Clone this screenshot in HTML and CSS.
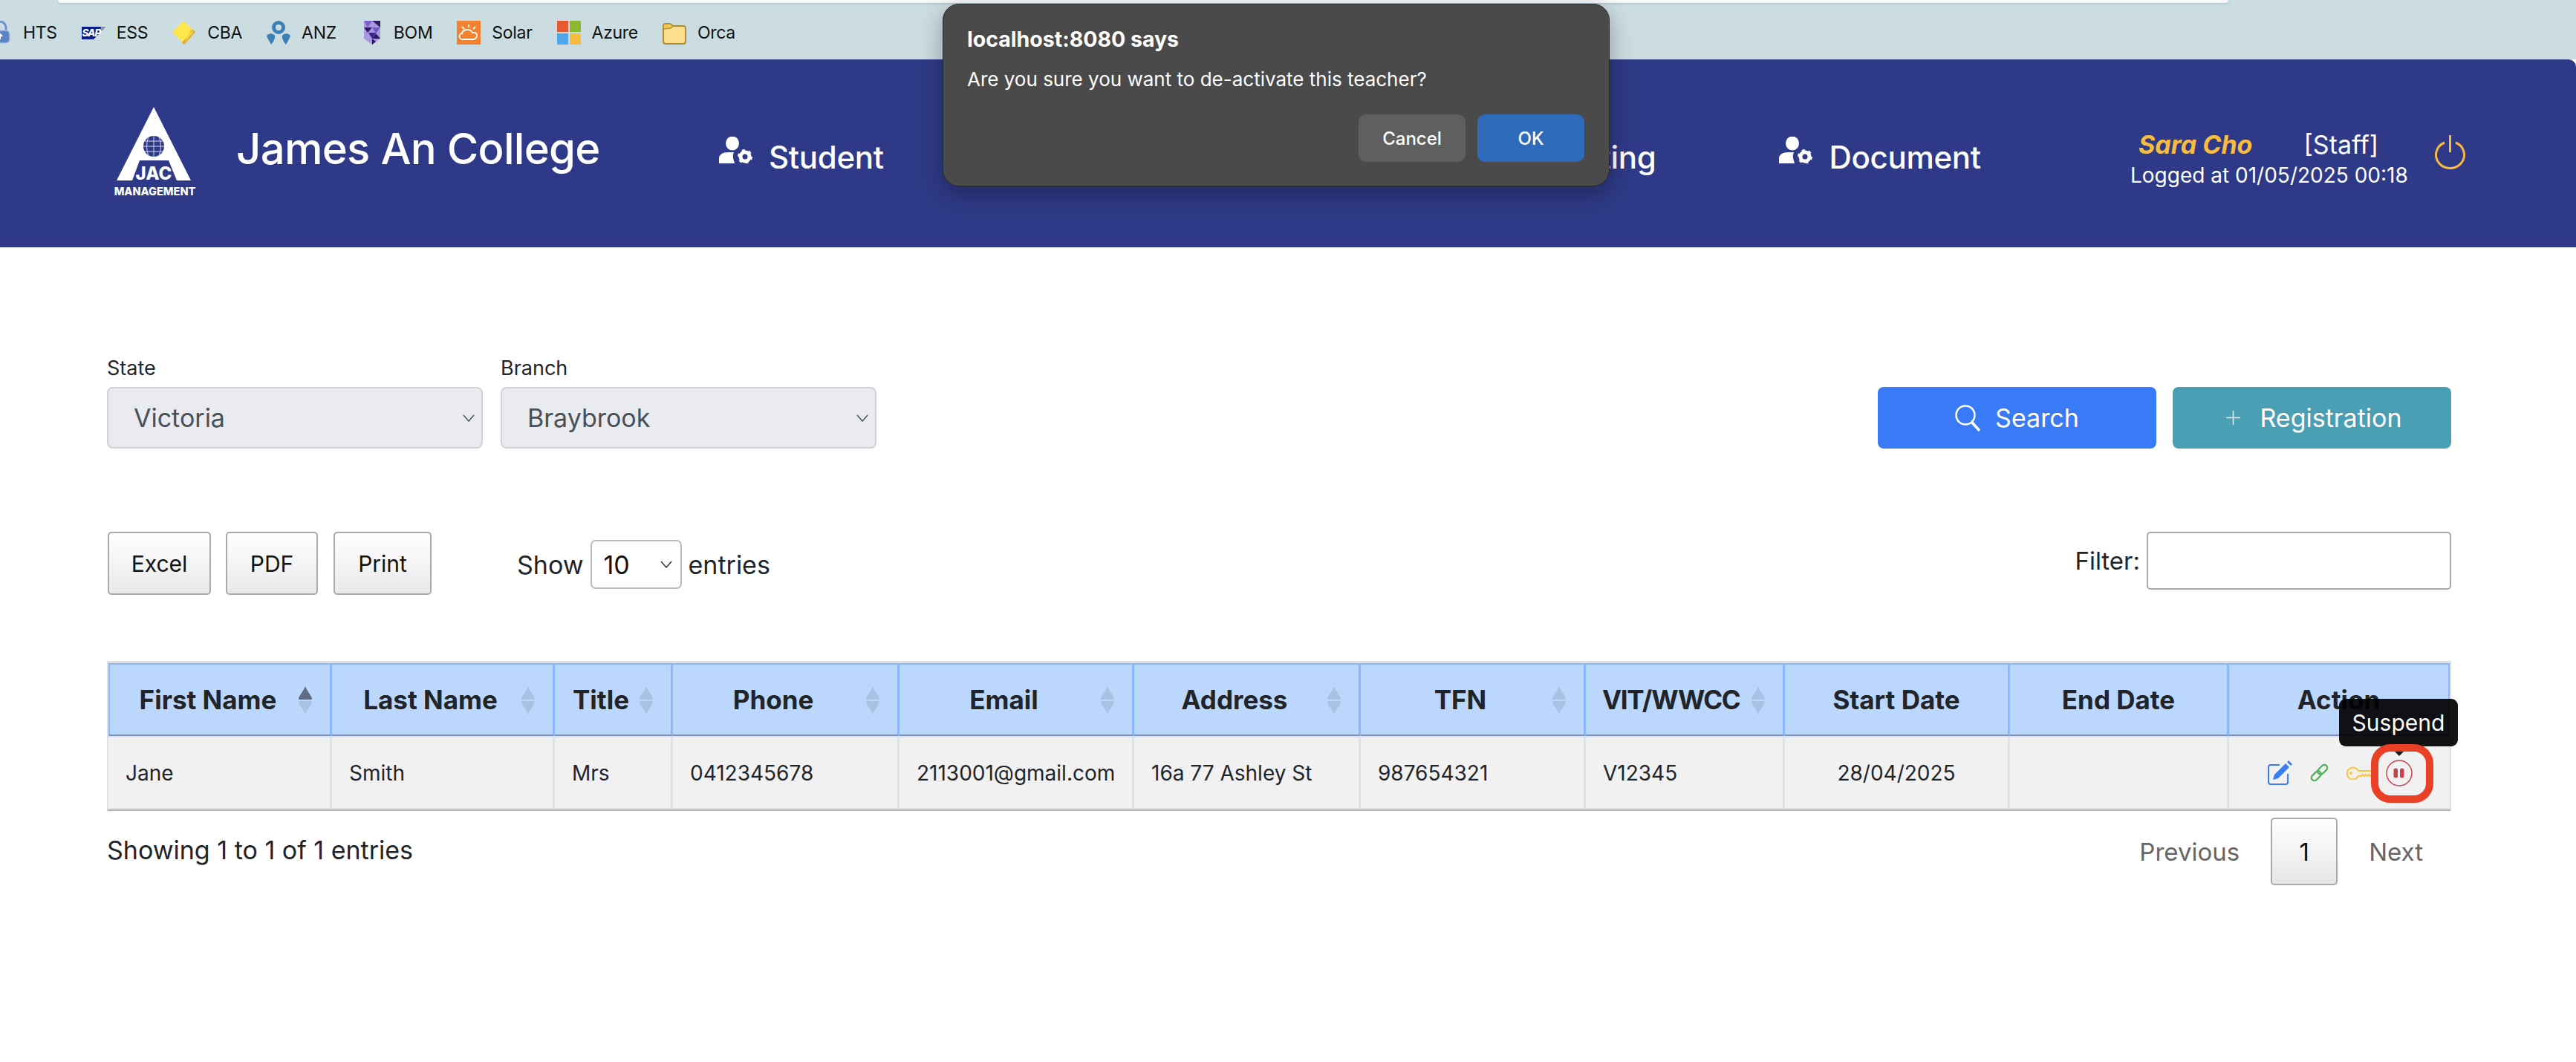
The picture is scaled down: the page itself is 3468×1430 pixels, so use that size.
FILE: index.html
```html
<!DOCTYPE html>
<html lang="en">

<head>
    <meta charset="UTF-8">
    <meta name="viewport" content="width=device-width, initial-scale=1.0">
    <title>James An College</title>
    <link rel="stylesheet" href="styles.css">
</head>

<body>
    <!-- Browser bookmarks -->
    <div class="browser-bar">
        <div class="url-edge"></div>
        <div class="bookmarks">
            <div class="bookmark">
                <svg class="bm-icon" viewBox="0 0 32 32"><path d="M8 13V9a8 8 0 0 1 16 0v4" fill="none" stroke="#6f8fc9" stroke-width="3"/><rect x="3" y="13" width="26" height="17" rx="5" fill="#5d83c6" stroke="#a9bfe4" stroke-width="1.5"/><path d="M16 18v7M13 21l3-3 3 3" fill="none" stroke="#fff" stroke-width="2"/></svg>
                <span>HTS</span>
            </div>
            <div class="bookmark">
                <svg class="bm-icon" viewBox="0 0 32 32"><polygon points="0,8 32,8 16,25 0,25" fill="#0a1f8f"/><polygon points="26,8 32,8 25,15" fill="#8a94a8"/><text class="sap-text" x="0.500" y="21">SAP</text></svg>
                <span>ESS</span>
            </div>
            <div class="bookmark">
                <svg class="bm-icon" viewBox="0 0 32 32"><polygon points="15,0 31,15 16,32 0,15" fill="#fde74c"/><polygon points="26,11 31,15 16,32 13,29 21,21" fill="#d9a63c"/><polygon points="29,15 16,30 20,21 26,13" fill="#f8cf3f"/></svg>
                <span>CBA</span>
            </div>
            <div class="bookmark">
                <svg class="bm-icon" viewBox="0 0 32 32"><circle cx="16" cy="9" r="6.5" fill="none" stroke="#3f7fb9" stroke-width="5"/><path d="M0 20c4-4 9-3 11 0 1 4-3 10-5 12-2-4-5-8-6-12zM32 20c-4-4-9-3-11 0-1 4 3 10 5 12 2-4 5-8 6-12z" fill="#3f7fb9"/></svg>
                <span>ANZ</span>
            </div>
            <div class="bookmark bookmark-narrow">
                <svg class="bm-icon" viewBox="0 0 22 32"><polygon points="0,0 22,0 22,24 11,32 0,24" fill="#a898e0"/><polygon points="0,0 11,0 5,9" fill="#7a63c9"/><polygon points="11,0 22,9 22,0" fill="#2c1a66"/><polygon points="0,9 11,9 5,16" fill="#2c1a66"/><polygon points="11,9 22,9 16,17 " fill="#6f58c0"/><polygon points="6,16 16,16 11,24" fill="#3a2580"/><polygon points="16,17 22,24 11,24" fill="#2c1a66"/><polygon points="11,24 16,28 11,32" fill="#2c1a66"/></svg>
                <span>BOM</span>
            </div>
            <div class="bookmark">
                <svg class="bm-icon" viewBox="0 0 32 32"><rect width="32" height="32" fill="#f28230"/><path d="M8 25a4 4 0 0 1-1-8c1-6 11-7 14-1 5-1 7 2 6 5-1 3-3 4-5 4H8zM16 5v4M7 8l3 3M25 8l-3 3" fill="none" stroke="#fff" stroke-width="1.8"/></svg>
                <span>Solar</span>
            </div>
            <div class="bookmark">
                <svg class="bm-icon" viewBox="0 0 32 32"><rect width="15" height="15" fill="#e55b31"/><rect x="17" width="15" height="15" fill="#8bb92f"/><rect y="17" width="15" height="15" fill="#4fa6ec"/><rect x="17" y="17" width="15" height="15" fill="#f7bc3d"/></svg>
                <span>Azure</span>
            </div>
            <div class="bookmark">
                <svg class="bm-icon" viewBox="0 0 32 32"><path d="M1 7a3 3 0 0 1 3-3h6l4 3h14a3 3 0 0 1 3 3v18a3 3 0 0 1-3 3H4a3 3 0 0 1-3-3z" fill="#fae08c" stroke="#b08d32" stroke-width="2"/><path d="M1 11V7a3 3 0 0 1 3-3h6l4 3-3 3z" fill="#f1cb52" stroke="#b08d32" stroke-width="1.5"/></svg>
                <span>Orca</span>
            </div>
        </div>
    </div>

    <!-- Header -->
    <header class="site-header">
        <svg class="logo" viewBox="0 0 120 130">
            <polygon points="55,0 105,99 5,99" fill="#fff"/>
            <polygon points="36,72 75,72 86,99 26,99" fill="#2e3a87"/>
            <circle cx="55" cy="53" r="14" fill="#2e3a87"/>
            <path d="M41 53h28M43 46h24M43 60h24M55 39v28M48 40q-5 13 0 26M62 40q5 13 0 26" fill="none" stroke="#cfd6ee" stroke-width="1"/>
            <text class="logo-jac" x="55" y="98">JAC</text>
            <text class="logo-sub" x="56.500" y="119">MANAGEMENT</text>
        </svg>
        <div class="site-title">James An College</div>
        <nav class="main-nav">
            <a class="nav-item"><svg class="nav-icon" viewBox="0 0 46 36"><use href="#person-gear"/></svg>Student</a>
            <a class="nav-item"><svg class="nav-icon" viewBox="0 0 46 36"><use href="#person-gear"/></svg>Class Attendance</a>
            <a class="nav-item"><svg class="nav-icon" viewBox="0 0 46 36"><use href="#person-gear"/></svg>Accounting</a>
            <a class="nav-item"><svg class="nav-icon" viewBox="0 0 46 36"><use href="#person-gear"/></svg>Document</a>
        </nav>
        <div class="user-box">
            <div class="user-info">
                <div class="user-line"><b>Sara Cho</b><span>[Staff]</span></div>
                <div class="login-time">Logged at 01/05/2025 00:18</div>
            </div>
            <svg class="power-icon" viewBox="0 0 41 46"><path d="M13 10A19 18 0 1 0 28 10M20.500 0v23" fill="none" stroke="#f7b93e" stroke-width="3"/></svg>
        </div>
    </header>

    <svg class="icon-defs" width="0" height="0">
        <symbol id="person-gear" viewBox="0 0 46 36">
            <ellipse cx="18" cy="9" rx="9" ry="9.500" fill="#fff"/>
            <path d="M0 36v-7q1-8 12-8h8q-2 4-1 8l2 7z" fill="#fff"/>
            <circle cx="35" cy="27" r="6" fill="none" stroke="#fff" stroke-width="5"/>
            <circle cx="35" cy="27" r="8.500" fill="none" stroke="#fff" stroke-width="3" stroke-dasharray="4 4.900"/>
        </symbol>
    </svg>

    <main class="content">
        <!-- Search filters -->
        <div class="filter-row">
            <div class="filter-group">
                <div class="field">
                    <label>State</label>
                    <select class="form-select" disabled><option>Victoria</option></select>
                </div>
                <div class="field">
                    <label>Branch</label>
                    <select class="form-select" disabled><option>Braybrook</option></select>
                </div>
            </div>
            <div class="filter-actions">
                <button class="btn btn-search">
                    <svg class="btn-icon" viewBox="0 0 36 36"><circle cx="14" cy="14" r="12.500" fill="none" stroke="#fff" stroke-width="2.500"/><path d="M23 24l10 11" stroke="#fff" stroke-width="3.500"/></svg>
                    Search
                </button>
                <button class="btn btn-register">
                    <svg class="plus-icon" viewBox="0 0 19 19"><path d="M9.500 0v19M0 9.500h19" stroke="#dff0f4" stroke-width="1.500"/></svg>
                    Registration
                </button>
            </div>
        </div>

        <!-- Table tools -->
        <div class="table-tools">
            <div class="export-buttons">
                <button class="dt-button dt-excel">Excel</button>
                <button class="dt-button dt-pdf">PDF</button>
                <button class="dt-button dt-print">Print</button>
            </div>
            <div class="page-length">
                Show
                <select class="length-select"><option>10</option></select>
                entries
            </div>
            <div class="table-filter">
                <label>Filter:</label>
                <input type="text" class="filter-input">
            </div>
        </div>

        <table class="data-table">
            <colgroup>
                <col class="col-first">
                <col class="col-last">
                <col class="col-title">
                <col class="col-phone">
                <col class="col-email">
                <col class="col-address">
                <col class="col-tfn">
                <col class="col-vit">
                <col class="col-start">
                <col class="col-end">
                <col class="col-action">
            </colgroup>
            <thead>
                <tr>
                    <th class="sortable">First Name<svg class="sort-icon sort-asc" viewBox="0 0 18 38"><use href="#sort-arrows"/></svg></th>
                    <th class="sortable">Last Name<svg class="sort-icon" viewBox="0 0 18 38"><use href="#sort-arrows"/></svg></th>
                    <th class="sortable">Title<svg class="sort-icon" viewBox="0 0 18 38"><use href="#sort-arrows"/></svg></th>
                    <th class="sortable">Phone<svg class="sort-icon" viewBox="0 0 18 38"><use href="#sort-arrows"/></svg></th>
                    <th class="sortable">Email<svg class="sort-icon" viewBox="0 0 18 38"><use href="#sort-arrows"/></svg></th>
                    <th class="sortable">Address<svg class="sort-icon" viewBox="0 0 18 38"><use href="#sort-arrows"/></svg></th>
                    <th class="sortable">TFN<svg class="sort-icon" viewBox="0 0 18 38"><use href="#sort-arrows"/></svg></th>
                    <th class="sortable tight">VIT/WWCC<svg class="sort-icon" viewBox="0 0 18 38"><use href="#sort-arrows"/></svg></th>
                    <th>Start Date</th>
                    <th>End Date</th>
                    <th>Action</th>
                </tr>
            </thead>
            <tbody>
                <tr>
                    <td>Jane</td>
                    <td>Smith</td>
                    <td>Mrs</td>
                    <td>0412345678</td>
                    <td>2113001@gmail.com</td>
                    <td>16a 77 Ashley St</td>
                    <td>987654321</td>
                    <td>V12345</td>
                    <td class="center">28/04/2025</td>
                    <td></td>
                    <td>
                        <div class="action-icons">
                            <svg class="act-edit" viewBox="0 0 33 33"><path d="M27 18v11a3 3 0 0 1-3 3H4a3 3 0 0 1-3-3V9a3 3 0 0 1 3-3h12" fill="none" stroke="#3a7cf6" stroke-width="2"/><path d="M7 26l2-7L24 4l5 5-15 15zM26 2l2-2 5 5-2 2z" fill="#3a7cf6"/></svg>
                            <svg class="act-link" viewBox="0 0 25 25"><g fill="none" stroke="#4fae52" stroke-width="2.200" transform="rotate(-45 12.500 12.500)"><rect x="-1" y="8.500" width="15" height="8" rx="4"/><rect x="11" y="8.500" width="15" height="8" rx="4"/></g></svg>
                            <svg class="act-key" viewBox="0 0 36 18"><path d="M17 6h18v4l-2 3-2-2-2 2-2-2-2 2-2-2-2 2h-4a8 8 0 1 1 0-7z" fill="none" stroke="#f9c440" stroke-width="2"/><circle cx="7" cy="9" r="2" fill="#f9c440"/></svg>
                            <svg class="act-pause" viewBox="0 0 36 36"><circle cx="18" cy="18" r="17" fill="none" stroke="#c9434f" stroke-width="1.500"/><rect x="10.500" y="11.500" width="5.500" height="13" rx="2.500" fill="#c9434f"/><rect x="19" y="11.500" width="5.500" height="13" rx="2.500" fill="#c9434f"/></svg>
                        </div>
                    </td>
                </tr>
            </tbody>
        </table>

        <svg class="icon-defs" width="0" height="0">
            <symbol id="sort-arrows" viewBox="0 0 18 38">
                <path class="arrow-up" d="M9 0C11 6 18 14 18 16.500Q18 18 16 18H2Q0 18 0 16.500C0 14 7 6 9 0Z"/>
                <path class="arrow-down" d="M9 38C11 32 18 24 18 21.500Q18 20 16 20H2Q0 20 0 21.500C0 24 7 32 9 38Z"/>
            </symbol>
        </svg>

        <div class="table-footer">
            <div class="table-info">Showing 1 to 1 of 1 entries</div>
            <div class="pagination">
                <span class="page-text page-prev">Previous</span>
                <button class="page-current">1</button>
                <span class="page-text page-next">Next</span>
            </div>
        </div>
    </main>

    <!-- Confirm dialog -->
    <div class="confirm-box">
        <div class="confirm-title">localhost:8080 says</div>
        <div class="confirm-msg">Are you sure you want to de-activate this teacher?</div>
        <div class="confirm-buttons">
            <button class="confirm-btn">Cancel</button>
            <button class="confirm-btn confirm-ok">OK</button>
        </div>
    </div>

    <div class="tooltip">Suspend</div>
    <div class="tooltip-arrow"></div>
    <div class="highlight-ring"></div>
</body>

</html>
```

FILE: styles.css
```css
* {
    box-sizing: border-box;
}

body {
    margin: 0;
    height: 1430px;
    overflow: hidden;
    position: relative;
    background-color: #fff;
    color: #212529;
    font-family: Inter, "Liberation Sans", sans-serif;
}

.icon-defs {
    position: absolute;
}

/* Browser bar */
.browser-bar {
    height: 80px;
    background-color: #ccdde1;
    overflow: hidden;
}

.url-edge {
    width: 2922px;
    height: 4px;
    margin-left: 78px;
    background-color: #f6f8f9;
    border-radius: 0 0 10px 10px;
    box-shadow: 0 1px 3px rgba(90, 120, 130, 0.3);
}

.bookmarks {
    display: flex;
    align-items: center;
    gap: 33px;
    height: 32px;
    margin-top: 24px;
    margin-left: -16px;
    font-size: 23px;
    letter-spacing: -0.3px;
    color: #111;
}

.bookmark {
    display: flex;
    align-items: center;
    gap: 15px;
}

.bm-icon {
    width: 32px;
    height: 32px;
}

.bookmark-narrow .bm-icon {
    width: 22px;
    margin: 0 3px 0 4px;
}

.sap-text {
    font-size: 13.500px;
    font-weight: 800;
    font-style: italic;
    letter-spacing: -1px;
    fill: #fff;
}

/* Header */
.site-header {
    display: flex;
    align-items: flex-start;
    height: 253px;
    padding-left: 152px;
    padding-right: 149px;
    background-color: #2e3a87;
    color: #fff;
    border-top-right-radius: 10px;
}

.logo {
    flex: none;
    width: 120px;
    height: 130px;
    margin-top: 64px;
}

.logo-jac {
    font-size: 24px;
    font-weight: 800;
    fill: #fff;
    text-anchor: middle;
}

.logo-sub {
    font-size: 14.500px;
    font-weight: 800;
    fill: #fff;
    text-anchor: middle;
}

.site-title {
    flex: none;
    width: 650px;
    margin-left: 46px;
    margin-top: 84px;
    font-size: 58px;
    font-weight: 500;
    line-height: 72px;
    letter-spacing: -0.7px;
}

.main-nav {
    display: flex;
    align-items: flex-start;
    gap: 166px;
    margin-top: 104px;
}

.nav-item {
    display: flex;
    align-items: flex-start;
    font-size: 42px;
    font-weight: 500;
    line-height: 56px;
    letter-spacing: -0.3px;
    white-space: nowrap;
}

.nav-icon {
    width: 46px;
    height: 36px;
    margin-right: 21px;
}

.user-box {
    display: flex;
    align-items: flex-start;
    margin-left: auto;
}

.user-info {
    width: 370px;
    margin-top: 94px;
}

.user-line {
    display: flex;
    gap: 69px;
    padding-left: 11px;
    font-size: 34px;
    line-height: 42px;
}

.user-line b {
    color: #f9bc40;
    font-style: italic;
    font-weight: 700;
}

.login-time {
    font-size: 28px;
    line-height: 34px;
    margin-top: 3px;
    white-space: nowrap;
}

.power-icon {
    width: 41px;
    height: 46px;
    margin-top: 102px;
    margin-left: 40px;
}

/* Main content */
.content {
    padding: 0 168px 0 144px;
}

.filter-row {
    display: flex;
    justify-content: space-between;
    align-items: flex-end;
    padding-top: 146px;
}

.filter-group {
    display: flex;
    gap: 24px;
}

.field label {
    display: block;
    margin-bottom: 8px;
    font-size: 27px;
    line-height: 34px;
}

.form-select {
    display: block;
    width: 506px;
    height: 83px;
    padding: 0 34px;
    border: 2px solid #ced4da;
    border-radius: 8px;
    background-color: #e9ebef;
    background-image: url("data:image/svg+xml,%3Csvg xmlns='http://www.w3.org/2000/svg' viewBox='0 0 16 10'%3E%3Cpath d='M1 1l7 8 7-8' fill='none' stroke='%23495057' stroke-width='1.500'/%3E%3C/svg%3E");
    background-repeat: no-repeat;
    background-position: right 9px center;
    background-size: 16px 10px;
    color: #495057;
    opacity: 1;
    font-family: inherit;
    font-size: 34px;
    appearance: none;
}

.filter-actions {
    display: flex;
    gap: 22px;
}

.btn {
    display: flex;
    align-items: center;
    justify-content: center;
    width: 375px;
    height: 83px;
    border: none;
    border-radius: 8px;
    color: #fff;
    font-family: inherit;
    font-size: 34px;
}

.btn-search {
    gap: 18px;
    background-color: #397bf6;
}

.btn-register {
    gap: 26px;
    padding-left: 12px;
    background-color: #4a9fb5;
}

.btn-icon {
    width: 36px;
    height: 36px;
}

.plus-icon {
    width: 19px;
    height: 19px;
}

.table-tools {
    display: flex;
    align-items: flex-start;
    margin-top: 112px;
}

.export-buttons {
    display: flex;
    gap: 20px;
    margin-left: 1px;
}

.dt-button {
    height: 85px;
    border: 2px solid #aaa;
    border-radius: 5px;
    background: linear-gradient(to bottom, #fff 0%, #e9e9e9 100%);
    color: #111;
    font-family: inherit;
    font-size: 30px;
}

.dt-excel {
    width: 139px;
}

.dt-pdf {
    width: 124px;
}

.dt-print {
    width: 132px;
    margin-left: 1px;
}

.page-length {
    display: flex;
    align-items: center;
    gap: 9px;
    margin-top: 11px;
    margin-left: 115px;
    font-size: 34px;
    height: 66px;
}

.length-select {
    width: 123px;
    height: 66px;
    padding-left: 16px;
    border: 2px solid #bbb;
    border-radius: 7px;
    background-color: #fff;
    background-image: url("data:image/svg+xml,%3Csvg xmlns='http://www.w3.org/2000/svg' viewBox='0 0 16 10'%3E%3Cpath d='M1 1l7 8 7-8' fill='none' stroke='%23333' stroke-width='1.500'/%3E%3C/svg%3E");
    background-repeat: no-repeat;
    background-position: right 11px center;
    background-size: 16px 10px;
    font-family: inherit;
    font-size: 34px;
    color: #111;
    appearance: none;
}

.table-filter {
    display: flex;
    align-items: center;
    gap: 9px;
    margin-left: auto;
    font-size: 33px;
    height: 78px;
}

.filter-input {
    width: 410px;
    height: 78px;
    border: 2px solid #aaa;
    border-radius: 5px;
}

/* Table */
.data-table {
    width: 3156px;
    margin-top: 89px;
    table-layout: fixed;
    border-collapse: separate;
    border-spacing: 0;
    border-top: 3px solid #dee2e6;
    border-left: 2px solid #dee2e6;
    border-right: 2px solid #dee2e6;
    border-bottom: 2px solid #b0b0b4;
}

.col-first { width: 301px; }
.col-last { width: 300px; }
.col-title { width: 159px; }
.col-phone { width: 305px; }
.col-email { width: 316px; }
.col-address { width: 305px; }
.col-tfn { width: 303px; }
.col-vit { width: 268px; }
.col-start { width: 303px; }
.col-end { width: 295px; }
.col-action { width: 297px; }

th {
    position: relative;
    height: 98px;
    padding: 0 10px;
    background-color: #bcd7fc;
    border-top: 2px solid #8ab7f9;
    border-right: 3px solid #8ab7f9;
    border-bottom: 2px solid #7e93b8;
    font-size: 35px;
    font-weight: 700;
    white-space: nowrap;
    text-align: center;
}

th:first-child {
    border-left: 2px solid #8ab7f9;
}

th:last-child {
    border-right-width: 2px;
}

th.sortable {
    padding: 0 56px 0 24px;
}

th.tight {
    padding-left: 22px;
    letter-spacing: -1.3px;
    text-align: left;
}

td:last-child {
    border-right: 0;
}

.sort-icon {
    position: absolute;
    top: 29px;
    right: 24px;
    width: 18px;
    height: 38px;
}

.arrow-up {
    fill: var(--arrow-up, #a9c2e4);
}

.arrow-down {
    fill: #a9c2e4;
}

.sort-asc {
    --arrow-up: #5e6b80;
}

td {
    height: 99px;
    padding: 0 23px;
    background-color: #f1f1f1;
    border-top: 2px solid #dee2e6;
    border-right: 3px solid #dee2e6;
    border-bottom: 2px solid #dee2e6;
    font-size: 28px;
    white-space: nowrap;
}

td.center {
    text-align: center;
}

.action-icons {
    display: flex;
    align-items: center;
    margin-left: 29px;
}

.act-edit {
    flex: none;
    width: 33px;
    height: 33px;
}

.act-link {
    flex: none;
    width: 25px;
    height: 25px;
    margin-left: 24px;
}

.act-key {
    flex: none;
    width: 36px;
    height: 18px;
    margin-left: 23px;
}

.act-pause {
    flex: none;
    width: 36px;
    height: 36px;
    margin-left: 18px;
}

.table-footer {
    display: flex;
    justify-content: space-between;
    align-items: flex-start;
    margin-top: 9px;
}

.table-info {
    margin-top: 22px;
    font-size: 34px;
    line-height: 44px;
}

.pagination {
    display: flex;
    align-items: center;
    height: 91px;
    margin-right: 38px;
}

.page-text {
    color: #666;
    font-size: 33px;
}

.page-current {
    width: 90px;
    height: 91px;
    margin: 0 42px;
    border: 2px solid #aaa;
    border-radius: 5px;
    background: linear-gradient(to bottom, #fff 0%, #e6e6e6 100%);
    font-family: inherit;
    font-size: 33px;
    color: #111;
}

/* Confirm dialog */
.confirm-box {
    position: absolute;
    top: 5px;
    left: 1269px;
    width: 898px;
    height: 246px;
    padding: 30px 33px 0 32px;
    background-color: #4a4a4a;
    border: 1px solid #2b2b2b;
    border-radius: 22px;
    box-shadow: 0 10px 32px rgba(0, 0, 0, 0.32);
    color: #fff;
}

.confirm-title {
    font-size: 28.500px;
    font-weight: 700;
    line-height: 34px;
}

.confirm-msg {
    margin-top: 20px;
    font-size: 26px;
    line-height: 34px;
}

.confirm-buttons {
    display: flex;
    justify-content: flex-end;
    gap: 16px;
    margin-top: 30px;
}

.confirm-btn {
    width: 144px;
    height: 64px;
    border: none;
    border-radius: 10px;
    background-color: #5f5f5f;
    color: #fff;
    font-family: inherit;
    font-size: 24px;
    font-weight: 500;
}

.confirm-ok {
    background-color: #2e6bbb;
}

/* Tooltip and red annotation */
.tooltip {
    position: absolute;
    top: 941px;
    left: 3149px;
    width: 160px;
    height: 64px;
    background-color: rgba(0, 0, 0, 0.92);
    border-radius: 9px;
    color: #fff;
    font-size: 30px;
    line-height: 64px;
    text-align: center;
}

.tooltip-arrow {
    position: absolute;
    top: 1005px;
    left: 3217px;
    border-left: 13px solid transparent;
    border-right: 13px solid transparent;
    border-top: 13px solid #1a1a1a;
}

.highlight-ring {
    position: absolute;
    top: 1002px;
    left: 3192px;
    width: 84px;
    height: 79px;
    border: 10px solid #ea4025;
    border-radius: 26px;
}
```
